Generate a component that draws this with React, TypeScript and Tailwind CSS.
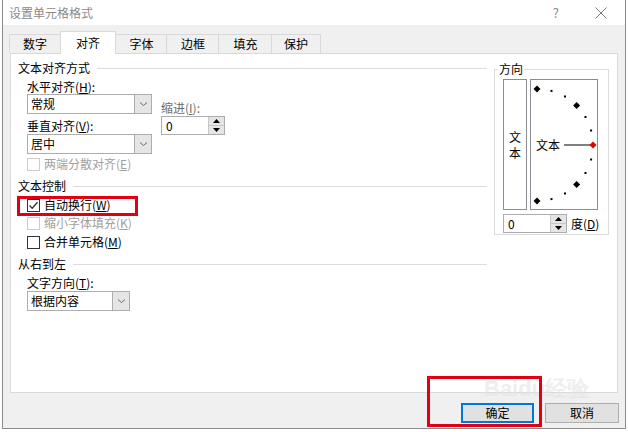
import type { ReactNode } from 'react'

const ui = "font-['Noto_Sans_CJK_SC','Microsoft_YaHei',sans-serif] text-[12px]"

function Header({ children }: { children: ReactNode }) {
    return (
        <div className="flex h-[16px] items-center">
            <span className="leading-[16px] text-black">{children}</span>
            <div className="ml-[7px] h-px flex-1 bg-[#dcdcdc]" />
        </div>
    )
}

function Chevron() {
    return (
        <svg width="9" height="6" viewBox="0 0 9 6">
            <path d="M1 1.5 L4.5 4.5 L8 1.5" fill="none" stroke="#6b6b6b" strokeWidth="1" />
        </svg>
    )
}

function Select({ value, width }: { value: string; width: number }) {
    return (
        <div className="flex h-[20px] border border-[#adadad] bg-white" style={{ width }}>
            <span className="flex-1 pl-[3px] leading-[18px] text-black">{value}</span>
            <div className="flex w-[17px] items-center justify-center border-l border-[#adadad] bg-[#e5e5e5]">
                <Chevron />
            </div>
        </div>
    )
}

function Spinner({ width }: { width: number }) {
    return (
        <div className="flex h-[19px] border border-[#adadad] bg-white" style={{ width }}>
            <span className="flex-1 pl-[4px] leading-[17px] text-black">0</span>
            <div className="flex w-[16px] flex-col border-l border-[#c8c8c8] bg-[#e5e5e5]">
                <div className="flex flex-1 items-center justify-center border-b border-[#c8c8c8]">
                    <svg width="7" height="4" viewBox="0 0 7 4"><path d="M3.5 0 L7 4 L0 4 Z" fill="#000" /></svg>
                </div>
                <div className="flex flex-1 items-center justify-center">
                    <svg width="7" height="4" viewBox="0 0 7 4"><path d="M0 0 L7 0 L3.5 4 Z" fill="#000" /></svg>
                </div>
            </div>
        </div>
    )
}

function Check({ label, checked, disabled }: { label: ReactNode; checked?: boolean; disabled?: boolean }) {
    return (
        <div className="flex h-[16px] items-center pl-[9px]">
            <div className={`flex h-[13px] w-[13px] items-center justify-center border bg-white ${disabled ? 'border-[#cccccc]' : 'border-[#333333]'}`}>
                {checked && (
                    <svg width="11" height="11" viewBox="0 0 11 11">
                        <path d="M1.5 5.5 L4.2 8.3 L9.5 2.3" fill="none" stroke="#333" strokeWidth="1.3" />
                    </svg>
                )}
            </div>
            <span className={`ml-[4px] leading-[16px] ${disabled ? 'text-[#a0a0a0]' : 'text-black'}`}>{label}</span>
        </div>
    )
}

function Dial() {
    const cx = 7
    const cy = 66
    const r = 56
    const marks = []
    for (let a = -90; a <= 90; a += 15) {
        const rad = (a * Math.PI) / 180
        const x = cx + r * Math.cos(rad)
        const y = cy + r * Math.sin(rad)
        if (a % 45 === 0) {
            marks.push(
                <path key={a} d={`M${x} ${y - 3.5} L${x + 3.5} ${y} L${x} ${y + 3.5} L${x - 3.5} ${y} Z`} fill={a === 0 ? '#e00000' : '#000'} />
            )
        } else {
            marks.push(<rect key={a} x={x - 1} y={y - 1} width="2" height="2" fill="#000" />)
        }
    }
    return (
        <div className="relative ml-[3px] h-[131px] w-[68px] border border-[#8c8c94] bg-white">
            <svg className="absolute left-[-1px] top-[-1px]" width="68" height="131" viewBox="0 0 68 131">
                <line x1="34" y1="66" x2="62" y2="66" stroke="#000" strokeWidth="1" />
                {marks}
            </svg>
            <span className="absolute left-[5px] top-[57px] leading-[16px] text-black">文本</span>
        </div>
    )
}

export default function App() {
    const tabs = [
        { name: '数字', w: 52 },
        { name: '对齐', w: 56, active: true },
        { name: '字体', w: 53 },
        { name: '边框', w: 54 },
        { name: '填充', w: 55 },
        { name: '保护', w: 50 },
    ]

    return (
        <div className={`relative h-[432px] w-[628px] overflow-hidden bg-white ${ui}`}>
            <div className="ml-[2px] flex h-[429px] w-[624px] flex-col border-x border-b border-[#8c8c8c] bg-[#f0f0f0]">
                {/* title bar */}
                <div className="flex h-[25px] items-center bg-white pl-[6px]">
                    <span className="text-[12px] text-[#8a8a8a]">设置单元格格式</span>
                    <span className="ml-auto text-[13px] text-[#8a8a8a]">?</span>
                    <svg className="ml-[36px] mr-[18px]" width="12" height="12" viewBox="0 0 12 12">
                        <path d="M0.5 0.5 L11.5 11.5 M11.5 0.5 L0.5 11.5" stroke="#7a7a7a" strokeWidth="1" />
                    </svg>
                </div>

                {/* tabs */}
                <div className="mt-[6px] flex h-[22px] items-end pl-[7px]">
                    {tabs.map(t => (
                        <div
                            key={t.name}
                            style={{ width: t.w }}
                            className={`relative flex items-center justify-center border-x border-t border-[#d9d9d9] text-black ${t.active ? 'z-10 -mb-px h-[23px] bg-white' : 'h-[19px] bg-[#f0f0f0] -mx-px'}`}
                        >
                            {t.name}
                        </div>
                    ))}
                </div>

                {/* panel */}
                <div className="relative mx-[7px] flex h-[340px] border border-[#d9d9d9] bg-white">
                    <div className="ml-[7px] flex w-[469px] flex-col">
                        <div className="mt-[6px]"><Header>文本对齐方式</Header></div>
                        <div className="mt-[4px] h-[14px] pl-[9px] leading-[14px] text-black">水平对齐(<u>H</u>):</div>
                        <div className="flex pl-[9px]">
                            <div className="flex flex-col">
                                <Select value="常规" width={125} />
                                <div className="mt-[5px] h-[14px] leading-[14px] text-black">垂直对齐(<u>V</u>):</div>
                                <div className="mt-[1px]"><Select value="居中" width={125} /></div>
                            </div>
                            <div className="ml-[9px] flex flex-col">
                                <div className="mt-[7px] h-[14px] leading-[14px] text-[#6d6d6d]">缩进(<u>I</u>):</div>
                                <div className="mt-[1px]"><Spinner width={64} /></div>
                            </div>
                        </div>
                        <div className="mt-[2px]"><Check label={<>两端分散对齐(<u>E</u>)</>} disabled /></div>

                        <div className="mt-[6px]"><Header>文本控制</Header></div>
                        <div className="mt-[3px]"><Check label={<>自动换行(<u>W</u>)</>} checked /></div>
                        <div className="mt-[2px]"><Check label={<>缩小字体填充(<u>K</u>)</>} disabled /></div>
                        <div className="mt-[3px]"><Check label={<>合并单元格(<u>M</u>)</>} /></div>

                        <div className="mt-[6px]"><Header>从右到左</Header></div>
                        <div className="mt-[4px] h-[14px] pl-[9px] leading-[14px] text-black">文字方向(<u>T</u>):</div>
                        <div className="mt-[1px] pl-[9px]"><Select value="根据内容" width={103} /></div>
                    </div>

                    {/* orientation group */}
                    <div className="relative ml-[7px] mt-[15px] h-[166px] w-[115px] border border-[#dcdcdc]">
                        <span className="absolute left-[3px] top-[-9px] bg-white px-[1px] leading-[16px] text-black">方向</span>
                        <div className="ml-[8px] mt-[9px] flex">
                            <div className="flex h-[131px] w-[24px] flex-col items-center justify-center border border-[#8c8c94] leading-[16px] text-black">
                                <span>文</span>
                                <span>本</span>
                            </div>
                            <Dial />
                        </div>
                        <div className="ml-[8px] mt-[4px] flex items-center">
                            <Spinner width={64} />
                            <span className="ml-[4px] text-black">度(<u>D</u>)</span>
                        </div>
                    </div>

                    {/* annotation */}
                    <div className="absolute left-[6px] top-[142px] h-[20px] w-[121px] border-[3px] border-[#e00012]" />
                </div>

                {/* buttons */}
                <div className="mr-[6px] mt-[10px] flex justify-end gap-[11px]">
                    <button className="h-[20px] w-[73px] border-2 border-[#0078d7] bg-[#e1e1e1] leading-[16px] text-black">确定</button>
                    <button className="h-[20px] w-[74px] border border-[#adadad] bg-[#e1e1e1] leading-[18px] text-black">取消</button>
                </div>
            </div>

            {/* watermark */}
            <div className="pointer-events-none absolute left-[484px] top-[378px] opacity-60">
                <span className="font-['Liberation_Sans',sans-serif] text-[22px] font-bold leading-[22px] text-[#e4e4e4]">Baidu经验</span>
            </div>

            {/* annotation */}
            <div className="absolute left-[427px] top-[376px] h-[51px] w-[115px] border-[3px] border-[#e00012]" />
        </div>
    )
}
